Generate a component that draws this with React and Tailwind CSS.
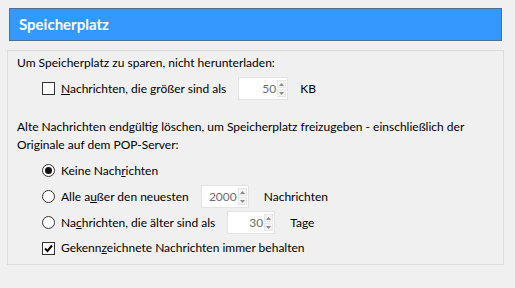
import React from "react";

function Spin({ value, w }) {
  return (
    <div className={`flex h-[23px] items-stretch border border-[#e3e3e3] bg-white ${w}`}>
      <div className="flex flex-1 items-center justify-end pr-[1px] text-[#6d6d6d]">{value}</div>
      <div className="flex w-[9px] flex-col items-center justify-center gap-[1px] my-[2px] mr-[1px]">
        <div className="flex h-[8px] w-[9px] items-center justify-center border border-[#e6e6e6] bg-[#f4f4f4]">
          <svg width="5" height="3" viewBox="0 0 5 3"><path d="M0 3 L2.5 0 L5 3Z" fill="#8a8a8a" /></svg>
        </div>
        <div className="flex h-[8px] w-[9px] items-center justify-center border border-[#e6e6e6] bg-[#f4f4f4]">
          <svg width="5" height="3" viewBox="0 0 5 3"><path d="M0 0 L2.5 3 L5 0Z" fill="#8a8a8a" /></svg>
        </div>
      </div>
    </div>
  );
}

function Check({ checked }) {
  return (
    <div className="flex h-[13px] w-[13px] items-center justify-center border border-[#333] bg-white">
      {checked && (
        <svg width="9" height="9" viewBox="0 0 9 9">
          <path d="M1 4.5 L3.5 7 L8 1.5" stroke="#000" strokeWidth="2" fill="none" />
        </svg>
      )}
    </div>
  );
}

function Radio({ checked }) {
  return (
    <div className="flex h-[13px] w-[13px] items-center justify-center rounded-full border border-[#333] bg-white">
      {checked && <div className="h-[7px] w-[7px] rounded-full bg-[#111]" />}
    </div>
  );
}

export default function App() {
  return (
    <div
      className="h-[288px] w-[515px] bg-[#f0f0f0] text-[12px] text-black"
      style={{ fontFamily: '"Segoe UI", Lato, sans-serif' }}
    >
      <div className="pt-[8px] pl-[9px] pr-[13px]">
        <div className="flex h-[33px] items-center border border-[#4f6f8f] bg-[#3399ff] pl-[9px] text-[15px] font-bold text-white">
          Speicherplatz
        </div>
      </div>
      <div className="mt-[9px] ml-[7px] mr-[11px] h-[215px] border border-[#dcdcdc] pl-[9px] pt-[3px]">
        <div className="h-[18px] leading-[18px]">Um Speicherplatz zu sparen, nicht herunterladen:</div>
        <div className="mt-[5px] flex items-center pl-[25px]">
          <Check />
          <span className="ml-[6px]"><u>N</u>achrichten, die größer sind als</span>
          <div className="ml-[12px]"><Spin value="50" w="w-[50px]" /></div>
          <span className="ml-[12px]">KB</span>
        </div>
        <div className="mt-[18px] leading-[18px]">
          Alte Nachrichten endgültig löschen, um Speicherplatz freizugeben - einschließlich der
          <br />
          Originale auf dem POP-Server:
        </div>
        <div className="mt-[8px] flex h-[17px] items-center pl-[25px]">
          <Radio checked />
          <span className="ml-[6px]">Keine Nach<u>r</u>ichten</span>
        </div>
        <div className="mt-[6px] flex items-center pl-[25px]">
          <Radio />
          <span className="ml-[6px]">Alle a<u>u</u>ßer den neuesten</span>
          <div className="ml-[12px]"><Spin value="2000" w="w-[48px]" /></div>
          <span className="ml-[15px]">Nachrichten</span>
        </div>
        <div className="mt-[3px] flex items-center pl-[25px]">
          <Radio />
          <span className="ml-[6px]">Na<u>c</u>hrichten, die älter sind als</span>
          <div className="ml-[12px]"><Spin value="30" w="w-[48px]" /></div>
          <span className="ml-[15px]">Tage</span>
        </div>
        <div className="mt-[5px] flex items-center pl-[25px]">
          <Check checked />
          <span className="ml-[6px]">Gekenn<u>z</u>eichnete Nachrichten immer behalten</span>
        </div>
      </div>
    </div>
  );
}
